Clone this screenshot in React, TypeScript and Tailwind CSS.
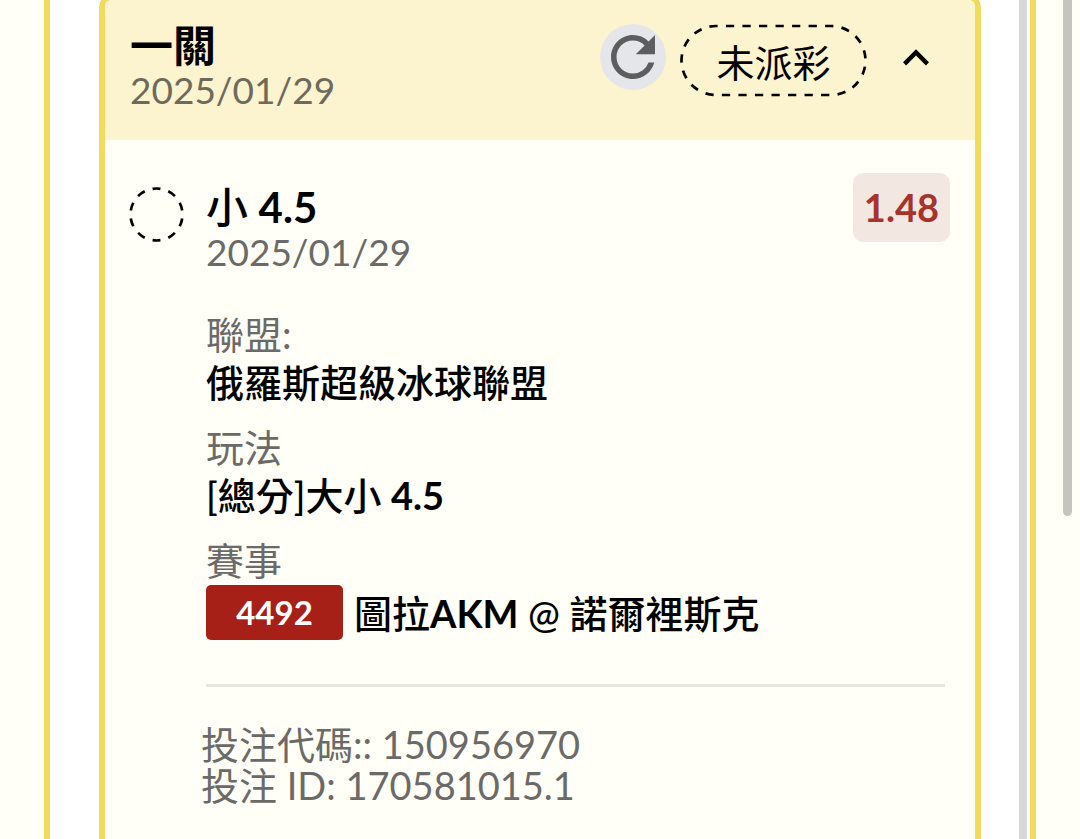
import React from "react";

function RefreshIcon() {
  return (
    <svg viewBox="0 0 24 24" className="size-full fill-[#5c5d5f]" aria-hidden="true">
      <path d="M17.65 6.35A7.958 7.958 0 0 0 12 4c-4.42 0-7.99 3.58-7.99 8s3.57 8 7.99 8c3.73 0 6.84-2.55 7.73-6h-2.08A5.99 5.99 0 0 1 12 18c-3.31 0-6-2.69-6-6s2.69-6 6-6c1.66 0 3.14.69 4.22 1.78L13 11h7V4z" />
    </svg>
  );
}

function ChevronUpIcon() {
  return (
    <svg viewBox="0 0 24 24" className="size-full fill-black" aria-hidden="true">
      <path d="M7.41 15.41 12 10.83l4.59 4.58L18 14l-6-6-6 6z" />
    </svg>
  );
}

function PillOutline() {
  return (
    <svg
      viewBox="0 0 187 73"
      className="absolute inset-0 size-full fill-none stroke-black"
      aria-hidden="true"
    >
      <rect
        x="1.5"
        y="2"
        width="184"
        height="69"
        rx="34.5"
        strokeWidth="2.7"
        pathLength={27}
        strokeDasharray="0.5 0.5"
        strokeDashoffset="0.4"
      />
    </svg>
  );
}

function PendingCircle() {
  return (
    <svg
      viewBox="0 0 55 55"
      className="mt-[47px] size-[55px] shrink-0 fill-none stroke-black"
      aria-hidden="true"
    >
      <circle
        cx="27.5"
        cy="27.5"
        r="26"
        strokeWidth="2.7"
        pathLength={10}
        strokeDasharray="0.5 0.5"
        strokeDashoffset="0.25"
        transform="rotate(-90 27.5 27.5)"
      />
    </svg>
  );
}

function Detail({ label, children }: { label: string; children: React.ReactNode }) {
  return (
    <div>
      <dt className="leading-[47px] text-[#6b6a67]">{label}</dt>
      <dd className="font-medium leading-[48px] text-black">{children}</dd>
    </div>
  );
}

function BetHeader() {
  return (
    <header className="flex h-[140px] items-start justify-between bg-[#fcf3cf] pl-[25px] pr-[33px] pt-[24px]">
      <div>
        <h2 className="text-[43px] font-bold leading-[43px] text-black">一關</h2>
        <p className="text-[37px] leading-[46px] text-[#6e6a5b]">2025/01/29</p>
      </div>
      <div className="flex items-start">
        <button
          type="button"
          aria-label="重新整理"
          className="size-[66px] rounded-full bg-[#e5e6e9]"
        >
          <RefreshIcon />
        </button>
        <span className="relative ml-[14px] flex h-[73px] w-[187px] items-center justify-center pt-[3px] text-black">
          <PillOutline />
          未派彩
        </span>
        <button type="button" aria-label="收合" className="ml-[23px] mt-[8px] size-[52px]">
          <ChevronUpIcon />
        </button>
      </div>
    </header>
  );
}

function BetBody() {
  return (
    <div className="flex items-start gap-[22px] pb-[32px] pl-[24px] pr-[25px]">
      <PendingCircle />
      <div className="grow">
        <div className="flex items-start justify-between pt-[33px]">
          <div className="pt-[12px]">
            <h3 className="text-[42px] font-medium leading-[44px] text-black">
              小 <span className="font-bold">4.5</span>
            </h3>
            <p className="text-[37px] leading-[46px] text-[#6b6a67]">2025/01/29</p>
          </div>
          <span className="rounded-[10px] bg-[#f3e7e1] px-[11px] font-bold leading-[69px] text-[#a6342a]">
            1.48
          </span>
        </div>
        <dl className="mt-[36px] flex flex-col gap-[18px]">
          <Detail label="聯盟:">俄羅斯超級冰球聯盟</Detail>
          <Detail label="玩法">
            [總分]大小 <span className="font-bold">4.5</span>
          </Detail>
          <Detail label="賽事">
            <span className="flex min-h-[57px] items-center gap-[11px]">
              <span className="w-[137px] rounded-[5px] bg-[#a62017] text-center text-[33px] font-bold leading-[55px] text-white">
                4492
              </span>
              <span>
                圖拉<span className="font-bold">AKM</span> @ 諾爾裡斯克
              </span>
            </span>
          </Detail>
        </dl>
        <hr className="mr-[5px] mt-[43px] border-t-[3px] border-[#e6e6df]" />
        <div className="-ml-[5px] mt-[37px] leading-[41px] text-[#6b6a67]">
          <p>投注代碼:: 150956970</p>
          <p>投注 ID: 170581015.1</p>
        </div>
      </div>
    </div>
  );
}

export default function App() {
  return (
    <div className="flex min-h-screen items-stretch overflow-hidden bg-[#fffff7] pl-[44px] font-['Lato','Noto_Sans_CJK_TC',sans-serif] text-[38px]">
      <main className="flex grow border-x-[6px] border-[#f2da5f] bg-white pl-[49px]">
        <article className="-mt-[5px] grow overflow-hidden rounded-t-[12px] border-x-[6px] border-t-[5px] border-[#f2da5f] bg-[#fffff7]">
          <BetHeader />
          <BetBody />
        </article>
        <div className="ml-[38px] mr-[3px] w-[8px] shrink-0 bg-[#d5d7d8]" />
      </main>
      <div className="w-[44px] shrink-0 pl-[27px]">
        <div className="h-[516px] w-[9px] rounded-b-full bg-[#c5c4bf]" />
      </div>
    </div>
  );
}
